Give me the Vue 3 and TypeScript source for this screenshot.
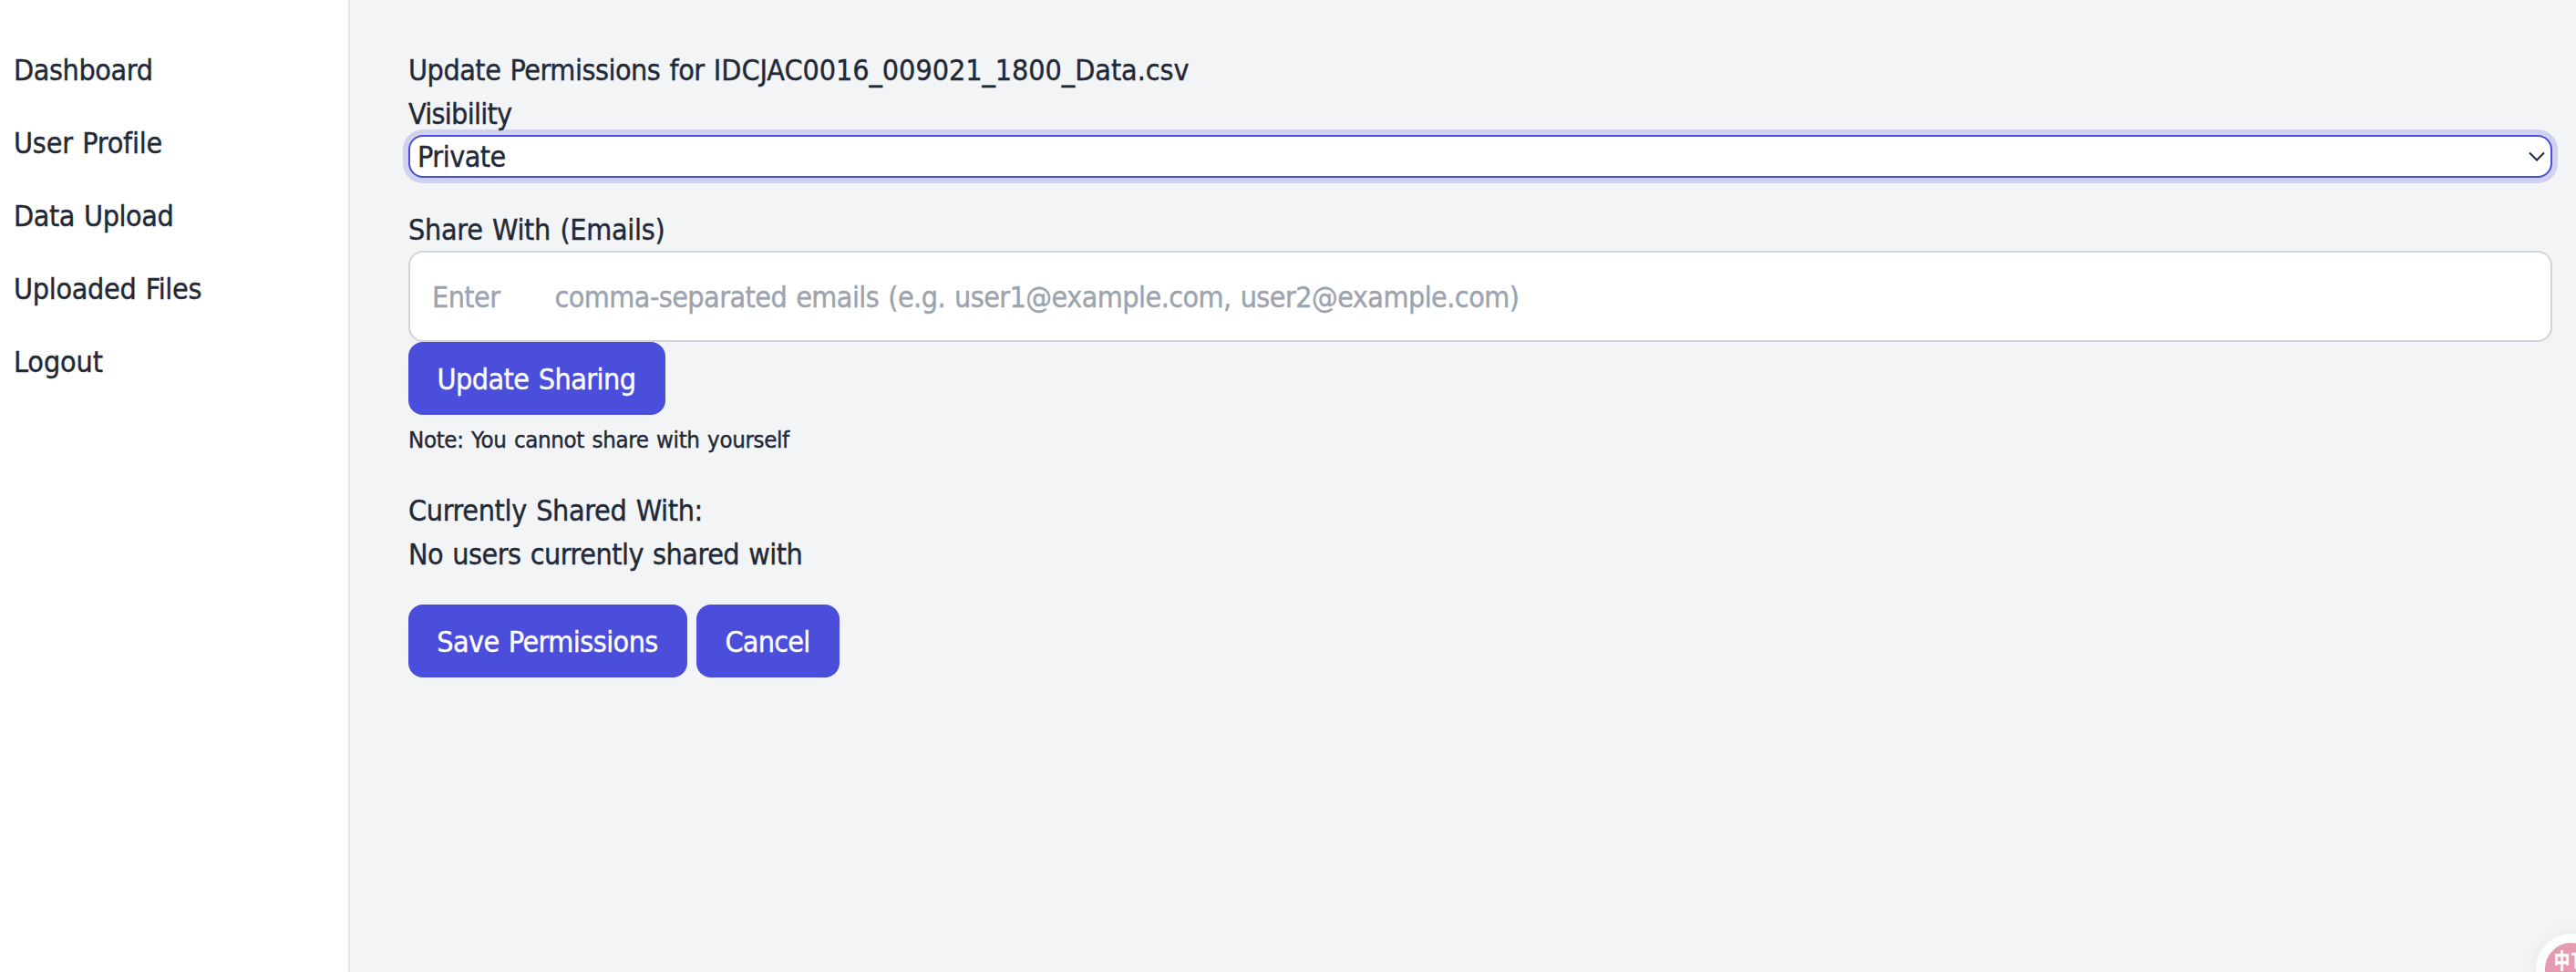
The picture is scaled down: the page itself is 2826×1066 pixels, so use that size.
<script setup lang="ts">
import { ref } from 'vue'

interface NavItem {
  label: string
  tracking: number
}

const nav: NavItem[] = [
  { label: 'Dashboard', tracking: -0.4 },
  { label: 'User Profile', tracking: -0.22 },
  { label: 'Data Upload', tracking: -0.46 },
  { label: 'Uploaded Files', tracking: -0.31 },
  { label: 'Logout', tracking: -0.1 },
]

const fileName = 'IDCJAC0016_009021_1800_Data.csv'
const visibility = ref('private')
const emails = ref('')
const hint = 'Enter      comma-separated emails (e.g. user1@example.com, user2@example.com)'
</script>

<template>
  <div class="layout">
    <aside class="sidebar">
      <nav>
        <a v-for="item in nav" :key="item.label" :style="{ letterSpacing: item.tracking + 'px' }">{{ item.label }}</a>
      </nav>
    </aside>
    <main class="content">
      <div class="line"><span class="title">Update Permissions for </span><span class="file">{{ fileName }}</span></div>
      <label class="line visibility-label">Visibility</label>
      <div class="select-wrap">
        <select v-model="visibility">
          <option value="private">Private</option>
          <option value="public">Public</option>
        </select>
        <svg class="chevron" width="18" height="12" viewBox="0 0 18 12" fill="none" stroke="#1f2937" stroke-width="2">
          <path d="M1 1.5L9 9.5L17 1.5" />
        </svg>
      </div>
      <label class="line share-label">Share With (Emails)</label>
      <input v-model="emails" type="text" :placeholder="hint" />
      <div class="actions"><button class="update" type="button">Update Sharing</button></div>
      <p class="note">Note: You cannot share with yourself</p>
      <div class="line shared-title">Currently Shared With:</div>
      <div class="line shared-empty">No users currently shared with</div>
      <div class="actions footer">
        <button class="save" type="button">Save Permissions</button>
        <button class="cancel" type="button">Cancel</button>
      </div>
    </main>
    <div class="translate"><span>中T</span></div>
  </div>
</template>

<style>
body {
  background: #f3f4f6;
  overflow: hidden;
}
</style>

<style scoped>
.layout {
  position: relative;
  display: flex;
  height: 1066px;
  overflow: hidden;
  background: #f3f4f6;
  color: #1f2937;
  font-family: 'DejaVu Sans Condensed', 'DejaVu Sans', 'Noto Sans CJK SC', sans-serif;
  font-size: 32px;
  line-height: 48px;
  word-spacing: 1.5px;
  -webkit-text-stroke-width: 0.4px;
}
.sidebar {
  box-sizing: border-box;
  flex: 0 0 384px;
  padding: 37px 0 0;
  background: #fff;
  border-right: 2px solid #e5e7eb;
}
.sidebar a {
  display: block;
  padding: 16px 15px;
}
.content {
  flex: 1;
  display: flex;
  flex-direction: column;
  padding: 52px 26px 0 64px;
}
.line {
  height: 48px;
  line-height: 50px;
  white-space: pre;
}
.title { letter-spacing: -0.48px; }
.file { letter-spacing: -0.05px; }
.visibility-label { letter-spacing: -0.72px; }
.select-wrap {
  position: relative;
  height: 47px;
  margin-bottom: 32px;
}
select {
  appearance: none;
  box-sizing: border-box;
  display: block;
  width: 100%;
  height: 47px;
  padding: 1px 8px 0;
  border: 2px solid #4b4ddb;
  border-radius: 16px;
  outline: none;
  background: #fff;
  box-shadow: 0 0 0 6px rgba(75, 77, 219, 0.2);
  color: inherit;
  font: inherit;
  line-height: 43px;
  letter-spacing: -0.5px;
}
.chevron {
  position: absolute;
  right: 8px;
  top: 18px;
}
.share-label { letter-spacing: -0.29px; }
input {
  box-sizing: border-box;
  width: 100%;
  height: 100px;
  padding: 2px 24px 0;
  border: 2px solid #d1d5db;
  border-radius: 16px;
  outline: none;
  background: #fff;
  font: inherit;
  letter-spacing: -0.55px;
  word-spacing: 1.4px;
}
input::placeholder {
  color: #9ca3af;
  opacity: 1;
}
.actions {
  display: flex;
  gap: 10px;
}
button {
  box-sizing: border-box;
  height: 80px;
  padding: 2px 0 0;
  border: 0;
  border-radius: 16px;
  background: #4b4ddb;
  color: #fff;
  font: inherit;
  word-spacing: 1.5px;
}
.update { width: 282px; padding-right: 1px; letter-spacing: -0.52px; }
.save { width: 306px; padding-right: 1px; letter-spacing: -0.55px; }
.cancel { width: 157px; padding-right: 1px; letter-spacing: -0.75px; }
.note {
  margin: 8px 0 34px;
  font-size: 25.6px;
  line-height: 38px;
  letter-spacing: -0.33px;
}
.shared-title { letter-spacing: -0.35px; }
.shared-empty { letter-spacing: -0.5px; }
.footer { margin-top: 32px; }
.translate {
  position: absolute;
  left: 2782px;
  top: 1024px;
  box-sizing: border-box;
  width: 78px;
  height: 78px;
  border: 10px solid #fcfefd;
  border-radius: 50%;
  background: #e59bb0;
  box-shadow: 0 0 20px rgba(0, 0, 0, 0.06);
  color: #fff;
}
.translate span {
  display: block;
  width: 50px;
  padding: 7px 0 0 10px;
  font: 700 23px/22px 'Noto Sans CJK SC', sans-serif;
  letter-spacing: 2px;
  white-space: nowrap;
  transform: scaleX(0.75);
  transform-origin: 10px 0;
}
</style>
